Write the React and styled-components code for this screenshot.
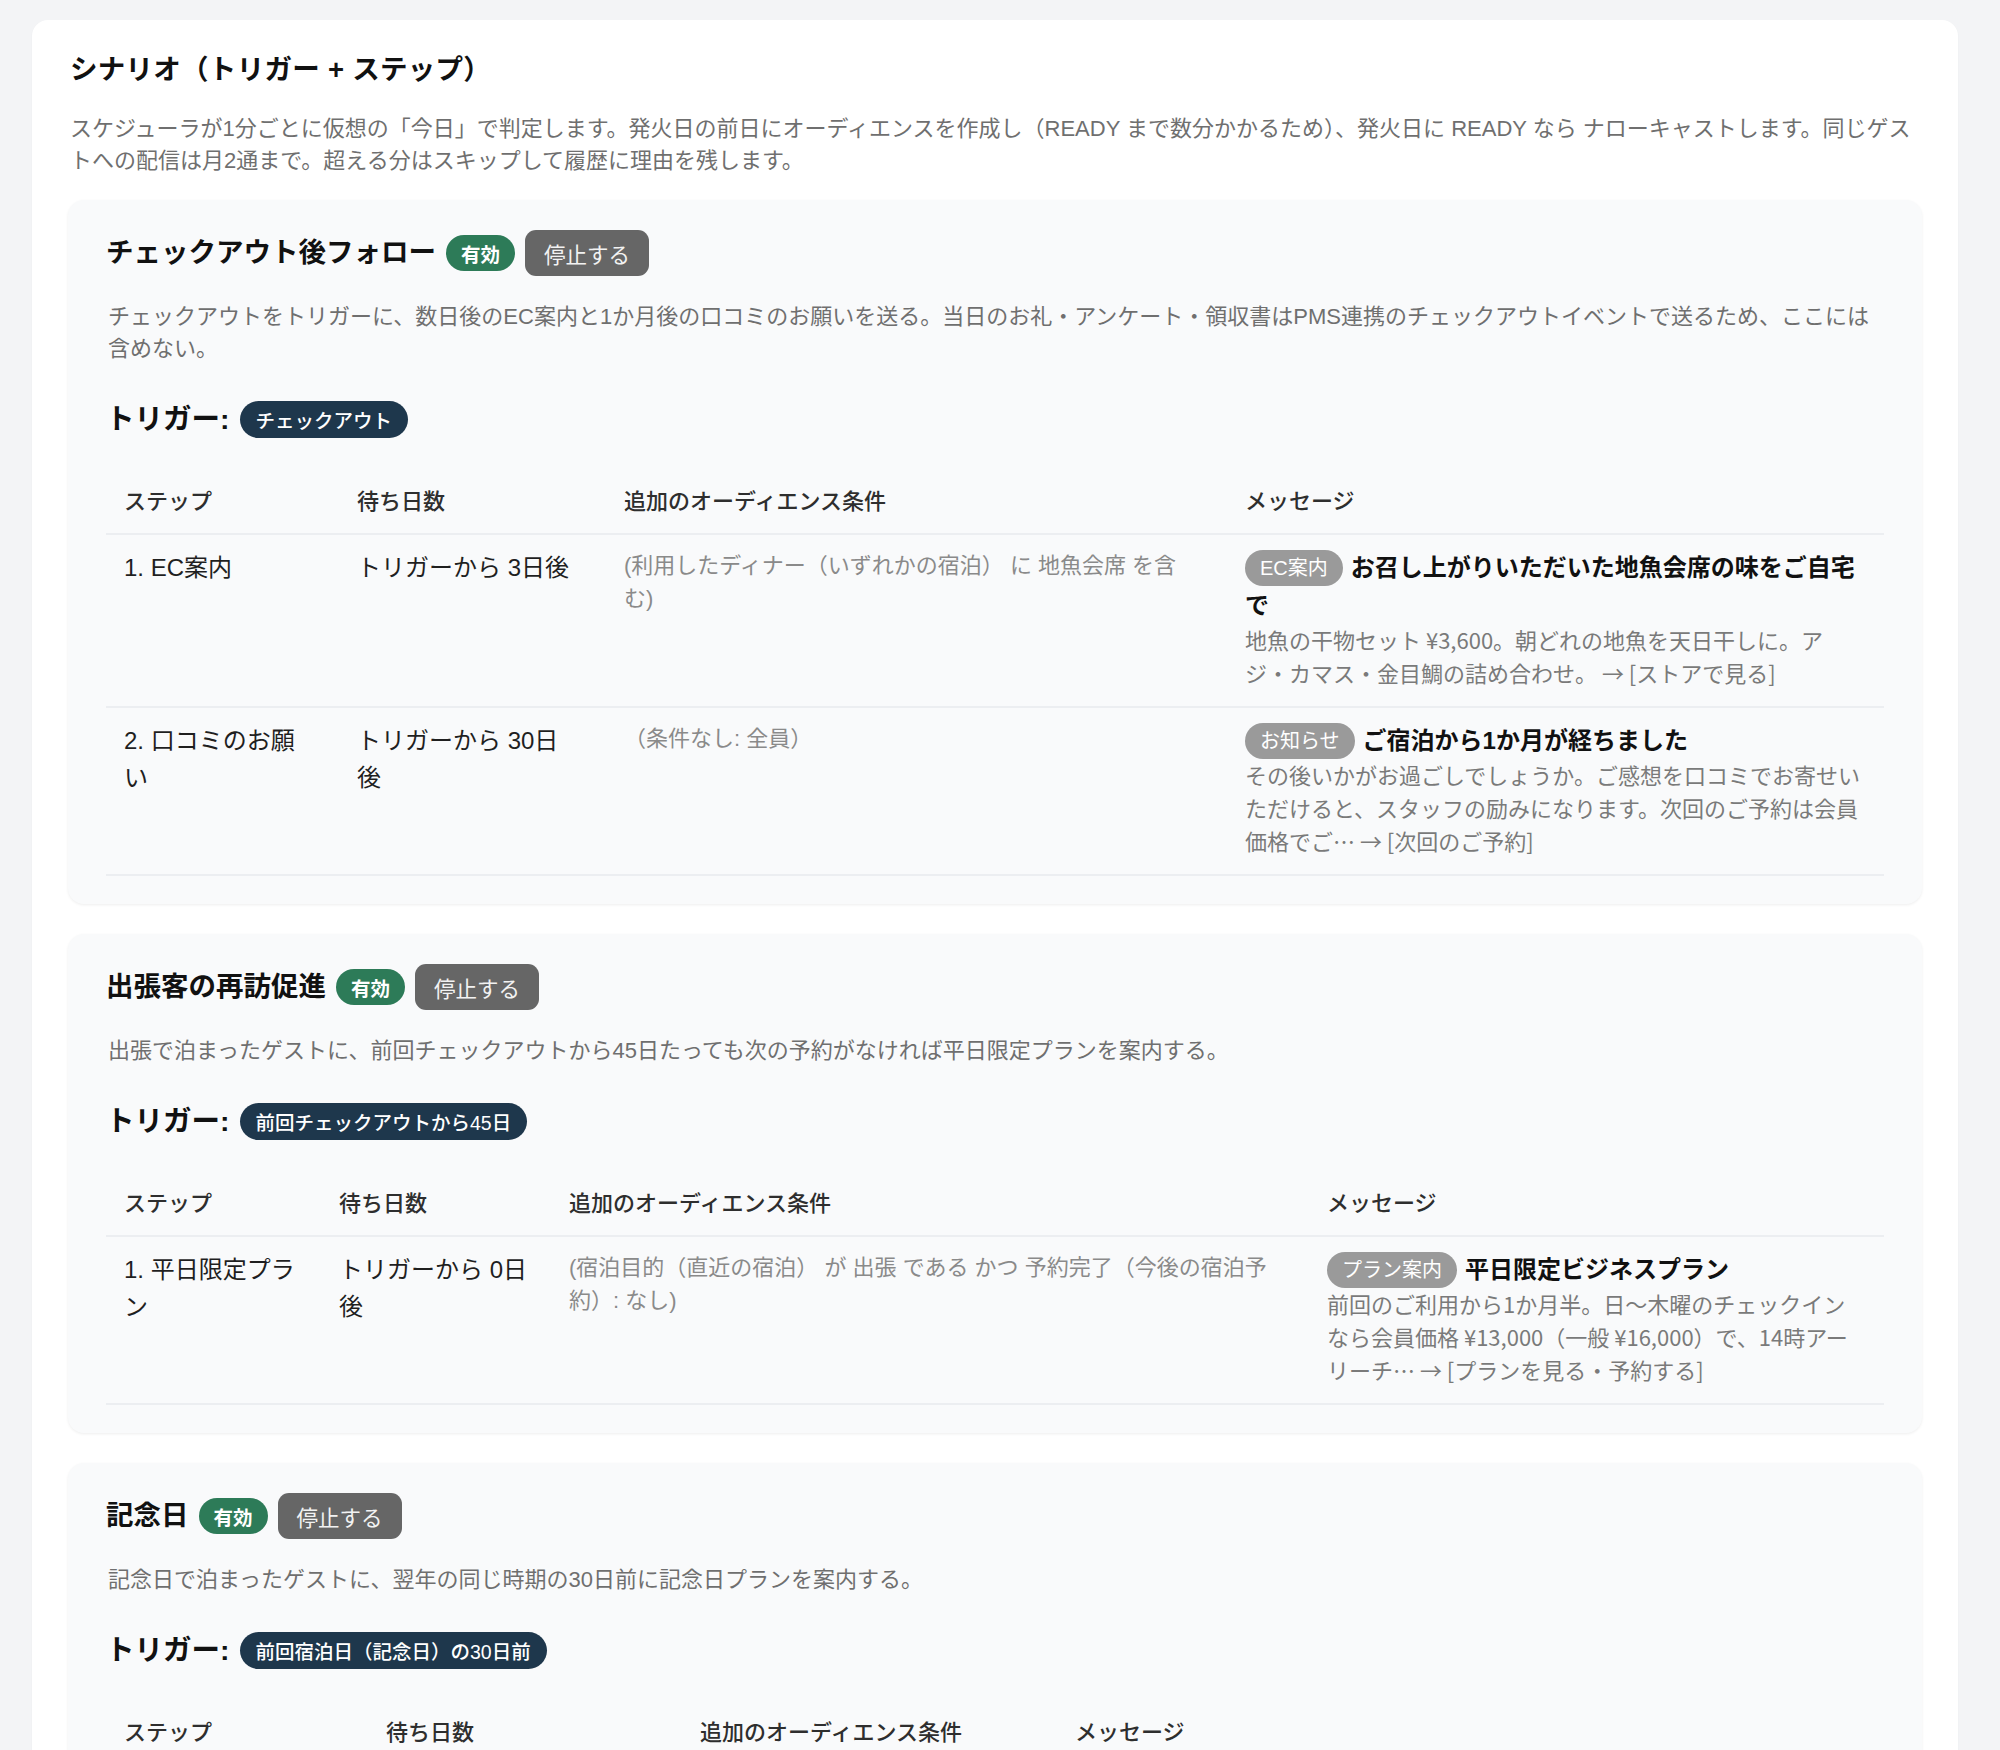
import React from 'react';
import styled, { createGlobalStyle } from 'styled-components';

const GlobalStyle = createGlobalStyle`
  body {
    margin: 0;
    background: #f3f4f6;
    font-family: "Liberation Sans", "Noto Sans CJK JP", sans-serif;
    color: #1a1a1a;
  }
`;

const Page = styled('div')`
  padding: 20px 42px 40px 32px;
`;

const Panel = styled('section')`
  background: #ffffff;
  border-radius: 16px;
  padding: 32px 36px 36px;
  box-shadow: 0 1px 2px rgba(0, 0, 0, 0.04);
`;

const PanelTitle = styled('h2')`
  margin: 0 2px;
  font-size: 27.5px;
  line-height: 36px;
  font-weight: 700;
  letter-spacing: 0.01em;
  color: #111;
`;

const Lead = styled('p')`
  margin: ${(p) => p.$top || 25}px 2px 0;
  font-size: 22px;
  line-height: 32px;
  color: #6f6f6f;
`;

const Scenario = styled('div')`
  margin-top: ${(p) => (p.$first ? 23 : 30)}px;
  background: #f9fafb;
  border-radius: 16px;
  padding: 30px 38px 28px;
  box-shadow: 0 1px 3px rgba(0, 0, 0, 0.07);
`;

const TitleRow = styled('div')`
  display: flex;
  align-items: center;
  gap: 10px;
`;

const ScenarioName = styled('h3')`
  margin: 0;
  font-size: 27.5px;
  line-height: 40px;
  font-weight: 700;
  color: #111;
`;

const StatusBadge = styled('span')`
  display: inline-flex;
  align-items: center;
  height: 36px;
  padding: 0 15px;
  border-radius: 18px;
  background: #2d7b58;
  color: #fff;
  font-size: 19.5px;
  font-weight: 700;
`;

const StopButton = styled('button')`
  height: 46px;
  padding: 0 19px;
  border: none;
  border-radius: 11px;
  background: #666666;
  color: #f2f2f2;
  font-family: inherit;
  font-size: 21.5px;
  cursor: pointer;
`;

const TriggerRow = styled('div')`
  display: flex;
  align-items: center;
  gap: 10px;
  margin-top: 34px;
`;

const TriggerLabel = styled('h4')`
  margin: 0;
  font-size: 28.5px;
  line-height: 40px;
  font-weight: 700;
  color: #111;
`;

const TriggerBadge = styled('span')`
  display: inline-flex;
  align-items: center;
  height: 37px;
  padding: 0 16px;
  border-radius: 19px;
  background: #1e374c;
  color: #fff;
  font-size: 19.5px;
  font-weight: 500;
`;

const Table = styled('table')`
  width: 100%;
  margin-top: 30px;
  border-collapse: collapse;
  table-layout: fixed;
`;

const Th = styled('th')`
  text-align: left;
  padding: 16px 18px 15px;
  font-size: 22px;
  line-height: 33px;
  font-weight: 500;
  color: #2e2e2e;
  border-bottom: 2px solid #eceef1;
`;

const Td = styled('td')`
  vertical-align: top;
  padding: 14px ${(p) => p.$pr}px 17px 18px;
  font-size: ${(p) => (p.$muted ? 22 : 24)}px;
  line-height: ${(p) => (p.$muted ? 33 : 37)}px;
  color: ${(p) => (p.$muted ? '#8a8a8a' : '#1f1f1f')};
  border-bottom: 2px solid #eceef1;
`;

const Tag = styled('span')`
  display: inline-block;
  height: 36px;
  line-height: 36px;
  padding: 0 15px;
  margin-right: 8px;
  border-radius: 18px;
  background: #9a9a9a;
  color: #fff;
  font-size: 20px;
  font-weight: 400;
  vertical-align: 1px;
`;

const MsgTitle = styled('div')`
  font-size: 24px;
  line-height: 38px;
  font-weight: 700;
  color: #111;
`;

const MsgBody = styled('div')`
  margin-top: -2px;
  font-family: "Noto Sans CJK JP", "Liberation Sans", sans-serif;
  font-size: 22px;
  line-height: 33px;
  color: #7a7a7a;
`;

// column widths and right padding, [width, paddingRight]
const scenarios = [
  {
    name: 'チェックアウト後フォロー',
    lead: 'チェックアウトをトリガーに、数日後のEC案内と1か月後の口コミのお願いを送る。当日のお礼・アンケート・領収書はPMS連携のチェックアウトイベントで送るため、ここには含めない。',
    trigger: 'チェックアウト',
    cols: [[233, 30], [267, 30], [621, 30], [657, 18]],
    steps: [
      {
        step: '1. EC案内',
        wait: 'トリガーから 3日後',
        cond: '(利用したディナー（いずれかの宿泊） に 地魚会席 を含む)',
        tag: 'EC案内',
        title: 'お召し上がりいただいた地魚会席の味をご自宅で',
        body: '地魚の干物セット ¥3,600。朝どれの地魚を天日干しに。アジ・カマス・金目鯛の詰め合わせ。 → [ストアで見る]',
      },
      {
        step: '2. 口コミのお願い',
        wait: 'トリガーから 30日後',
        cond: '（条件なし: 全員）',
        tag: 'お知らせ',
        title: 'ご宿泊から1か月が経ちました',
        body: 'その後いかがお過ごしでしょうか。ご感想を口コミでお寄せいただけると、スタッフの励みになります。次回のご予約は会員価格でご… → [次回のご予約]',
      },
    ],
  },
  {
    name: '出張客の再訪促進',
    lead: '出張で泊まったゲストに、前回チェックアウトから45日たっても次の予約がなければ平日限定プランを案内する。',
    trigger: '前回チェックアウトから45日',
    cols: [[215, 18], [230, 18], [758, 18], [575, 18]],
    steps: [
      {
        step: '1. 平日限定プラン',
        wait: 'トリガーから 0日後',
        cond: '(宿泊目的（直近の宿泊） が 出張 である かつ 予約完了（今後の宿泊予約）: なし)',
        tag: 'プラン案内',
        title: '平日限定ビジネスプラン',
        body: '前回のご利用から1か月半。日〜木曜のチェックインなら会員価格 ¥13,000（一般 ¥16,000）で、14時アーリーチ… → [プランを見る・予約する]',
      },
    ],
  },
  {
    name: '記念日',
    lead: '記念日で泊まったゲストに、翌年の同じ時期の30日前に記念日プランを案内する。',
    trigger: '前回宿泊日（記念日）の30日前',
    cols: [[262, 18], [314, 18], [375, 18], [827, 18]],
    steps: [
      {
        step: '1. 記念日プラン',
        wait: 'トリガーから 0日後',
        cond: '（条件なし: 全員）',
        tag: 'プラン案内',
        title: '今年の記念日も当館で',
        body: '昨年は記念日のご滞在をありがとうございました。今年も会員価格でご用意しています。 → [記念日プランを見る]',
      },
    ],
  },
];

const ScenarioCard = ({ data, first }) => {
  const pr = data.cols.map((c) => c[1]);
  return (
    <Scenario $first={first}>
      <TitleRow>
        <ScenarioName>{data.name}</ScenarioName>
        <StatusBadge>有効</StatusBadge>
        <StopButton>停止する</StopButton>
      </TitleRow>
      <Lead $top={25}>{data.lead}</Lead>
      <TriggerRow>
        <TriggerLabel>トリガー:</TriggerLabel>
        <TriggerBadge>{data.trigger}</TriggerBadge>
      </TriggerRow>
      <Table>
        <colgroup>
          {data.cols.map(([w], i) => (
            <col key={i} style={{ width: w }} />
          ))}
        </colgroup>
        <thead>
          <tr>
            <Th>ステップ</Th>
            <Th>待ち日数</Th>
            <Th>追加のオーディエンス条件</Th>
            <Th>メッセージ</Th>
          </tr>
        </thead>
        <tbody>
          {data.steps.map((s) => (
            <tr key={s.step}>
              <Td $pr={pr[0]}>{s.step}</Td>
              <Td $pr={pr[1]}>{s.wait}</Td>
              <Td $pr={pr[2]} $muted>
                {s.cond}
              </Td>
              <Td $pr={pr[3]}>
                <MsgTitle>
                  <Tag>{s.tag}</Tag>
                  {s.title}
                </MsgTitle>
                <MsgBody>{s.body}</MsgBody>
              </Td>
            </tr>
          ))}
        </tbody>
      </Table>
    </Scenario>
  );
};

const App = () => {
  return (
    <Page>
      <GlobalStyle />
      <Panel>
        <PanelTitle>シナリオ（トリガー + ステップ）</PanelTitle>
        <Lead>
          スケジューラが1分ごとに仮想の「今日」で判定します。発火日の前日にオーディエンスを作成し（READY まで数分かかるため）、発火日に READY なら ナローキャストします。同じゲストへの配信は月2通まで。超える分はスキップして履歴に理由を残します。
        </Lead>
        {scenarios.map((s, i) => (
          <ScenarioCard key={s.name} data={s} first={i === 0} />
        ))}
      </Panel>
    </Page>
  );
};

export default App;
